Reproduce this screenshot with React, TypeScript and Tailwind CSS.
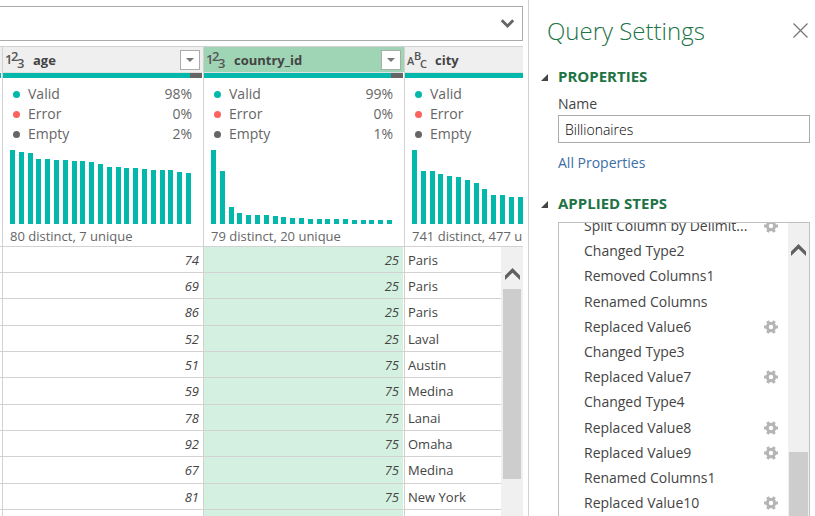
import React from "react";

type Column = {
  name: string;
  kind: "number" | "text";
  valid: number;
  error: number;
  empty: number;
  summary: string;
  bars: number[];
  selected?: boolean;
};

const columns: Column[] = [
  {
    name: "age",
    kind: "number",
    valid: 98,
    error: 0,
    empty: 2,
    summary: "80 distinct, 7 unique",
    bars: [74, 72, 71, 65, 65, 64, 64, 63, 63, 62, 60, 57, 57, 56, 56, 55, 54, 54, 54, 52, 51],
  },
  {
    name: "country_id",
    kind: "number",
    valid: 99,
    error: 0,
    empty: 1,
    summary: "79 distinct, 20 unique",
    bars: [74, 53, 17, 11, 9, 9, 9, 8, 7, 6, 6, 5, 5, 5, 5, 5, 4, 4, 4, 4, 4],
    selected: true,
  },
  {
    name: "city",
    kind: "text",
    valid: 100,
    error: 0,
    empty: 0,
    summary: "741 distinct, 477 unique",
    bars: [74, 53, 53, 50, 48, 47, 44, 41, 35, 29, 29, 27, 27, 26, 26, 25, 25, 24, 24, 23, 23],
  },
];

const rows: [string, string, string][] = [
  ["74", "25", "Paris"],
  ["69", "25", "Paris"],
  ["86", "25", "Paris"],
  ["52", "25", "Laval"],
  ["51", "75", "Austin"],
  ["59", "75", "Medina"],
  ["78", "75", "Lanai"],
  ["92", "75", "Omaha"],
  ["67", "75", "Medina"],
  ["81", "75", "New York"],
  ["", "", ""],
];

const steps: { name: string; gear?: boolean }[] = [
  { name: "Split Column by Delimit...", gear: true },
  { name: "Changed Type2" },
  { name: "Removed Columns1" },
  { name: "Renamed Columns" },
  { name: "Replaced Value6", gear: true },
  { name: "Changed Type3" },
  { name: "Replaced Value7", gear: true },
  { name: "Changed Type4" },
  { name: "Replaced Value8", gear: true },
  { name: "Replaced Value9", gear: true },
  { name: "Renamed Columns1" },
  { name: "Replaced Value10", gear: true },
];

function Gear() {
  return (
    <svg width="14" height="14" viewBox="0 0 14 14" fill="none" stroke="#b5b5b5" aria-hidden="true">
      <circle cx="7" cy="7" r="3.7" strokeWidth="3" />
      <path
        strokeWidth="3"
        d="M0 7h3M11 7h3M3.5 0.94l1.5 2.6M9 10.46l1.5 2.6M10.5 0.94l-1.5 2.6M5 10.46l-1.5 2.6"
      />
    </svg>
  );
}

function ScrollUp() {
  return (
    <svg width="15" height="12" viewBox="0 0 15 12" fill="#606060" aria-hidden="true">
      <path d="M7.5 0L15 7.5V12L7.5 4.8L0 12V7.5z" />
    </svg>
  );
}

function TypeIcon({ kind }: { kind: "number" | "text" }) {
  return (
    <svg
      width="20"
      height="20"
      viewBox="0 0 20 20"
      aria-hidden="true"
      className="overflow-visible fill-[#555] font-semibold"
    >
      {kind === "number" ? (
        <g fontSize="13">
          <text x="-1" y="14">1</text>
          <text x="5" y="11">2</text>
          <text x="11" y="18">3</text>
        </g>
      ) : (
        <g fontSize="11">
          <text x="-1" y="15">A</text>
          <text x="6" y="10">B</text>
          <text x="12" y="18">C</text>
        </g>
      )}
    </svg>
  );
}

function Stat({ dot, label, value }: { dot: string; label: string; value: number }) {
  return (
    <div className="flex h-5 items-center text-sm text-[#666]">
      <span className={`mr-2 size-[7px] rounded-full ${dot}`} />
      <span className="flex-1">{label}</span>
      <span>{value}%</span>
    </div>
  );
}

function ColumnHeader({ column }: { column: Column }) {
  return (
    <th scope="col" className="border-t border-b border-l border-[#d2d2d2] p-0 text-left font-normal">
      <div
        className={`flex h-[25px] items-center pr-[3px] pl-[3px] ${column.selected ? "bg-[#9fd5b5]" : "bg-[#efefef]"}`}
      >
        <TypeIcon kind={column.kind} />
        <span className="ml-[7px] flex-1 pt-0.5 text-[13px] font-bold text-[#444]">{column.name}</span>
        <button
          type="button"
          aria-label={`Filter ${column.name}`}
          className="flex size-5 items-center justify-center border border-[#ababab] bg-white"
        >
          <svg width="8" height="4" viewBox="0 0 8 4" fill="#777" aria-hidden="true">
            <path d="M0 0h8L4 4z" />
          </svg>
        </button>
      </div>
      <div className="mr-px flex h-1.5 border-t border-[#e0e0e0]">
        <span className="flex-1 bg-[#01b8aa]" />
        {column.empty > 0 && <span className="w-3 bg-[#666]" />}
      </div>
      <div className="pt-1.5 pr-[11px] pl-2.5">
        <Stat dot="bg-[#01b8aa]" label="Valid" value={column.valid} />
        <Stat dot="bg-[#fd625e]" label="Error" value={column.error} />
        <Stat dot="bg-[#666]" label="Empty" value={column.empty} />
      </div>
      <div className="mt-1.5 mr-3 ml-[7px] flex h-[74px] items-end justify-between">
        {column.bars.map((height, i) => (
          <span key={i} className="w-[5px] bg-[#01b8aa]" style={{ height }} />
        ))}
      </div>
      <div className="h-[22px] pl-[7px] text-[13px] leading-6 whitespace-nowrap text-[#666]">{column.summary}</div>
    </th>
  );
}

function SectionTitle({ children }: { children: React.ReactNode }) {
  return (
    <h2 className="flex h-8 items-center text-[15px] font-bold text-[#217346]">
      <svg width="7" height="7" viewBox="0 0 7 7" fill="#444" aria-hidden="true" className="mr-2.5">
        <path d="M7 0v7H0z" />
      </svg>
      {children}
    </h2>
  );
}

export default function App() {
  const cell = "h-[26px] border-b border-l border-[#d2d2d2] p-0 group-nth-[3n]:h-[27px]";
  return (
    <div className="flex h-screen overflow-hidden bg-white font-['Open_Sans',sans-serif]">
      <main className="flex min-w-0 flex-1 flex-col border-r border-[#d2d2d2] pt-1.5 pr-[5px]">
        <div className="flex h-[35px] shrink-0 border border-l-0 border-[#ababab]">
          <input aria-label="Formula" className="min-w-0 flex-1 px-2 text-sm outline-none" />
          <button type="button" aria-label="Expand formula bar" className="flex w-[29px] items-center justify-center">
            <svg width="13" height="9" viewBox="0 0 13 9" fill="none" stroke="#666" strokeWidth="2.8" aria-hidden="true">
              <path d="M0.8 1.2L6.5 6.9L12.2 1.2" />
            </svg>
          </button>
        </div>

        <div className="relative mt-[5px] min-h-0 flex-1 overflow-hidden">
          <table className="w-[605px] table-fixed border-separate border-spacing-0">
            <colgroup>
              <col className="w-[2px]" />
              <col className="w-[201px]" />
              <col className="w-[201px]" />
              <col className="w-[201px]" />
            </colgroup>
            <thead>
              <tr>
                <td className="border-t border-b border-[#d2d2d2] p-0 align-top">
                  <div className="h-[25px] bg-[#efefef]" />
                  <div className="mt-px mr-px h-[5px] bg-[#01b8aa]" />
                </td>
                {columns.map((column) => (
                  <ColumnHeader key={column.name} column={column} />
                ))}
              </tr>
            </thead>
            <tbody className="text-[13px] leading-5 text-[#444]">
              {rows.map(([age, country, city], i) => (
                <tr key={i} className="group">
                  <td className="border-b border-[#d2d2d2] p-0" />
                  <td className={`${cell} text-right italic`}>
                    <div className="pr-1">{age}</div>
                  </td>
                  <td className={`${cell} text-right italic`}>
                    <div className="mr-px flex h-full min-h-[25px] items-center justify-end bg-[#d3f0e0] pr-1">
                      {country}
                    </div>
                  </td>
                  <td className={cell}>
                    <div className="pl-[3px]">{city}</div>
                  </td>
                </tr>
              ))}
            </tbody>
          </table>
          <div className="absolute top-[201px] right-0 bottom-0 flex w-[22px] flex-col items-center bg-[#f0f0f0]">
            <button type="button" aria-label="Scroll up" className="flex h-[42px] items-center pt-3">
              <ScrollUp />
            </button>
            <div className="h-[190px] w-[18px] bg-[#cdcdcd]" />
          </div>
        </div>
      </main>

      <aside className="flex w-[286px] shrink-0 flex-col pr-[5px] pl-3 text-sm text-[#444]">
        <header className="flex h-[61px] items-center justify-between pl-1.5">
          <h1 className="text-2xl font-light text-[#217346]">Query Settings</h1>
          <button type="button" aria-label="Close" className="pr-0.5">
            <svg width="15" height="15" viewBox="0 0 15 15" stroke="#777" strokeWidth="1.3" aria-hidden="true">
              <path d="M0.5 0.5l14 14M14.5 0.5l-14 14" />
            </svg>
          </button>
        </header>

        <SectionTitle>PROPERTIES</SectionTitle>
        <div className="flex flex-col pl-[17px]">
          <label htmlFor="query-name" className="h-[22px] leading-[22px]">
            Name
          </label>
          <input
            id="query-name"
            defaultValue="Billionaires"
            className="h-7 w-full border border-[#ababab] px-1.5 text-sm font-light text-black outline-none"
          />
          <a href="#properties" className="mt-2.5 h-5 leading-5 text-[#3a6ea5]">
            All Properties
          </a>
        </div>

        <div className="mt-[15px]">
          <SectionTitle>APPLIED STEPS</SectionTitle>
        </div>
        <div className="mt-0.5 ml-[17px] flex min-h-0 flex-1 overflow-hidden border border-b-0 border-[#c0c0c0]">
          <ol className="-mt-2.5 min-w-0 flex-1 pr-2.5 pl-[25px]">
            {steps.map((step) => (
              <li
                key={step.name}
                className="flex h-[25px] items-center justify-between whitespace-nowrap nth-[5n+3]:h-[26px]"
              >
                {step.name}
                {step.gear && (
                  <button type="button" aria-label={`Edit ${step.name}`}>
                    <Gear />
                  </button>
                )}
              </li>
            ))}
          </ol>
          <div className="flex w-[21px] shrink-0 flex-col items-center bg-[#f0f0f0]">
            <button type="button" aria-label="Scroll up" className="flex h-[229px] items-start pt-[21px]">
              <ScrollUp />
            </button>
            <div className="w-[19px] flex-1 bg-[#cdcdcd]" />
          </div>
        </div>
      </aside>
    </div>
  );
}
